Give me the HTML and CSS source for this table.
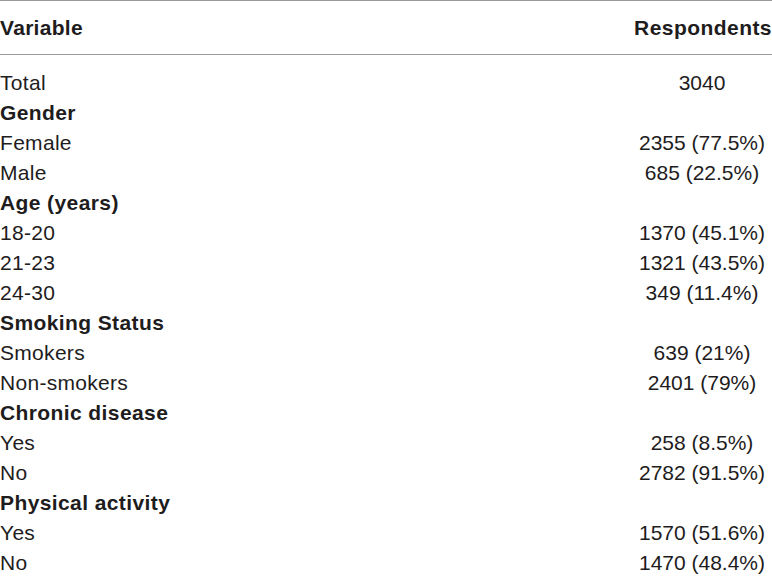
FILE: index.html
```html
<!DOCTYPE html>
<html>
<head>
<meta charset="utf-8">
<link rel="stylesheet" href="styles.css">
</head>
<body>
<div class="table">
  <div class="row head"><div class="var">Variable</div><div class="val">Respondents</div></div>
  <div class="body">
    <div class="row"><div class="var">Total</div><div class="val">3040</div></div>
    <div class="row group"><div class="var">Gender</div><div class="val"></div></div>
    <div class="row"><div class="var">Female</div><div class="val">2355 (77.5%)</div></div>
    <div class="row"><div class="var">Male</div><div class="val">685 (22.5%)</div></div>
    <div class="row group"><div class="var">Age (years)</div><div class="val"></div></div>
    <div class="row"><div class="var">18-20</div><div class="val">1370 (45.1%)</div></div>
    <div class="row"><div class="var">21-23</div><div class="val">1321 (43.5%)</div></div>
    <div class="row"><div class="var">24-30</div><div class="val">349 (11.4%)</div></div>
    <div class="row group"><div class="var">Smoking Status</div><div class="val"></div></div>
    <div class="row"><div class="var">Smokers</div><div class="val">639 (21%)</div></div>
    <div class="row"><div class="var">Non-smokers</div><div class="val">2401 (79%)</div></div>
    <div class="row group"><div class="var">Chronic disease</div><div class="val"></div></div>
    <div class="row"><div class="var">Yes</div><div class="val">258 (8.5%)</div></div>
    <div class="row"><div class="var">No</div><div class="val">2782 (91.5%)</div></div>
    <div class="row group"><div class="var">Physical activity</div><div class="val"></div></div>
    <div class="row"><div class="var">Yes</div><div class="val">1570 (51.6%)</div></div>
    <div class="row"><div class="var">No</div><div class="val">1470 (48.4%)</div></div>
  </div>
</div>
</body>
</html>
```
FILE: styles.css
```css
html, body {
  margin: 0;
  padding: 0;
  background: #ffffff;
}
body {
  font-family: "Liberation Sans", Arial, sans-serif;
  font-size: 21px;
  color: #1e1c1d;
  overflow: hidden;
}
.table {
  width: 772px;
  border-top: 1px solid #9a9a9a;
}
.row {
  display: grid;
  grid-template-columns: 1fr 140px;
  line-height: 30px;
  height: 30px;
}
.var {
  letter-spacing: 0.3px;
}
.val {
  text-align: center;
  white-space: nowrap;
}
.head {
  font-weight: bold;
  padding: 12px 0 11px;
  border-bottom: 1px solid #9a9a9a;
}
.head .val {
  text-align: right;
  letter-spacing: 0.45px;
  margin-right: 0;
}
.body {
  padding-top: 13px;
}
.group .var {
  font-weight: bold;
  letter-spacing: 0.4px;
}
```
